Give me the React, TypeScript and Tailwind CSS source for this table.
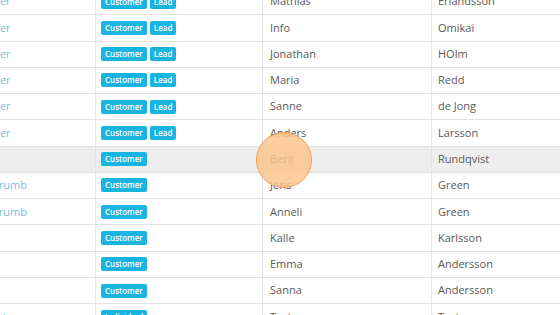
import React from "react";

type Row = {
  c1: string;
  c1ml: string;
  tags: string[];
  first: string;
  last: string;
  hl?: boolean;
};

const rows: Row[] = [
  { c1: "Partner", c1ml: "-ml-[28px]", tags: ["Customer", "Lead"], first: "Mathias", last: "Erlandsson" },
  { c1: "Partner", c1ml: "-ml-[28px]", tags: ["Customer", "Lead"], first: "Info", last: "Omikai" },
  { c1: "Partner", c1ml: "-ml-[28px]", tags: ["Customer", "Lead"], first: "Jonathan", last: "HOlm" },
  { c1: "Partner", c1ml: "-ml-[28px]", tags: ["Customer", "Lead"], first: "Maria", last: "Redd" },
  { c1: "Partner", c1ml: "-ml-[28px]", tags: ["Customer", "Lead"], first: "Sanne", last: "de Jong" },
  { c1: "Partner", c1ml: "-ml-[28px]", tags: ["Customer", "Lead"], first: "Anders", last: "Larsson" },
  { c1: "", c1ml: "", tags: ["Customer"], first: "Berit", last: "Rundqvist", hl: true },
  { c1: "Skrumb", c1ml: "-ml-[13px]", tags: ["Customer"], first: "Jens", last: "Green" },
  { c1: "Skrumb", c1ml: "-ml-[13px]", tags: ["Customer"], first: "Anneli", last: "Green" },
  { c1: "", c1ml: "", tags: ["Customer"], first: "Kalle", last: "Karlsson" },
  { c1: "", c1ml: "", tags: ["Customer"], first: "Emma", last: "Andersson" },
  { c1: "", c1ml: "", tags: ["Customer"], first: "Sanna", last: "Andersson" },
  { c1: "Testquuuus", c1ml: "-ml-[15px]", tags: ["Individual"], first: "Testquuuus", last: "Testquuuus" },
];

export default function App() {
  return (
    <div
      className="relative w-[560px] h-[315px] overflow-hidden bg-white"
      style={{ fontFamily: '"Open Sans", "Noto Sans", sans-serif' }}
    >
      <div className="-mt-[11px] flex flex-col">
        {rows.map((r, i) => (
          <div
            key={i}
            className={`grid grid-cols-[96px_167px_169px_1fr] h-[26.27px] border-b border-[#e2e2e2] ${
              r.hl ? "bg-[#eeeeee]" : "bg-white"
            }`}
          >
            <div className="border-r border-[#e6e6e6] flex items-center overflow-hidden">
              <span className={`whitespace-nowrap text-[11px] text-[#7dbcdc] ${r.c1ml}`}>{r.c1}</span>
            </div>
            <div className="border-r border-[#e6e6e6] flex items-center pl-[5px] gap-[3px]">
              {r.tags.map((t) => (
                <span
                  key={t}
                  className="h-[14px] px-[4px] rounded-[2px] bg-[#1ab4e0] text-white text-[8px] font-semibold flex items-center leading-none"
                >
                  {t}
                </span>
              ))}
            </div>
            <div className="border-r border-[#e6e6e6] flex items-center pl-[7px] text-[11px] text-[#5a5a5a] whitespace-nowrap">
              {r.first}
            </div>
            <div className="flex items-center pl-[6px] text-[11px] text-[#5a5a5a] whitespace-nowrap">
              {r.last}
            </div>
          </div>
        ))}
      </div>
      <div className="absolute left-[256px] top-[132px] w-[56px] h-[56px] rounded-full bg-[#fcc48c]/85 border-[1.5px] border-[#f29c50]" />
    </div>
  );
}
